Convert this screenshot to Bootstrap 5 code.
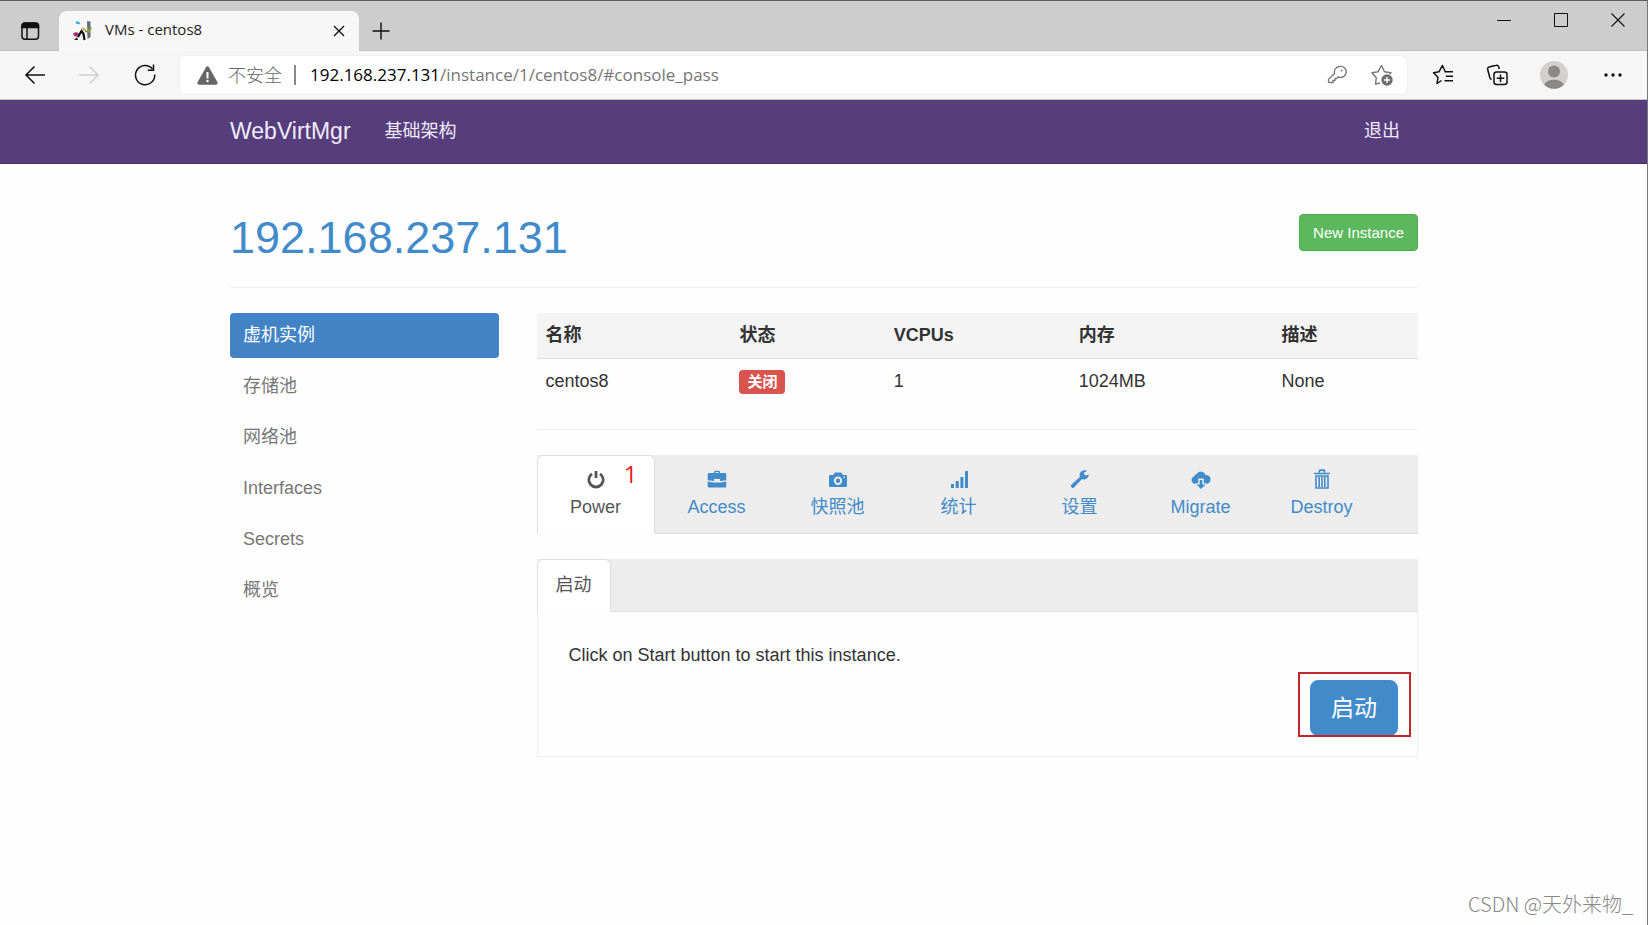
<!DOCTYPE html>
<html lang="zh-CN">
<head>
<meta charset="utf-8">
<meta name="viewport" content="width=device-width, initial-scale=1">
<title>VMs - centos8</title>
<link href="https://cdn.jsdelivr.net/npm/bootstrap@5.3.0/dist/css/bootstrap.min.css" rel="stylesheet">
<style>
:root { --ui: "Open Sans", "Noto Sans CJK SC", sans-serif; --blue: #428bca; }
body { font: 18px/26px "Liberation Sans", "Noto Sans CJK SC", sans-serif; color: #333; background: #fefefe; border-top: 1px solid #5f5f5f; border-right: 1px solid #777; }
svg { display: block; flex: none; }
a { text-decoration: none; }
button.plain { border: 0; background: none; padding: 0; color: #111; }

/* browser frame */
.titlebar { background: #cdcdcd; height: 50px; padding: 10px 0 0 20px; border-bottom: 1px solid #c0c0c0; font-family: var(--ui); }
.page-tab { width: 300px; height: 40px; margin: 0 13px -1px 19px; padding: 0 14px; background: #f7f7f7; border-radius: 8px 8px 0 0; color: #222; font-size: 15px; }
.window-buttons { gap: 43px; padding: 2px 22px 0 0; }
.toolbar { background: #f6f6f6; height: 49px; padding: 0 25px 0 24px; border-bottom: 1px solid #c4c4c4; }
.toolbar-nav { gap: 34px; margin-right: 24px; }
.address { height: 38px; border-radius: 6px; background: #fff; padding: 0 14px 0 17px; font-family: var(--ui); font-size: 17px; box-shadow: 0 0 2px #e4e4e4; }
.address .state { color: #666; font-size: 18px; font-weight: 300; margin: 0 12px 0 10px; }
.address .rule { width: 2px; height: 20px; background: #888; margin-right: 14px; }
.address label { color: #000; }
.address input { border: 0; outline: 0; padding: 0; color: #767676; background: none; min-width: 0; }
.toolbar-tools { gap: 32px; margin-left: 25px; }

/* site */
.site-width { max-width: 1227px; padding: 0 19px 0 20px; }
.site-nav { background: #563d7c; height: 64px; border-bottom: 1px solid #3f2f63; padding: 0 0 2px; }
.site-nav a { color: #f1eafa; }
.site-nav .navbar-brand { font-size: 23px; line-height: 26px; padding: 0; margin-right: 34px; }
.log-out { margin-right: 18px; }
.page-head { height: 124px; padding-top: 50px; border-bottom: 1px solid #eee; margin-bottom: 25px; }
.page-head h1 { font-size: 45px; line-height: 48px; font-weight: 400; margin: 0; }
.page-head h1 a { color: var(--blue); }
.btn-new { --bs-btn-color: #fff; --bs-btn-bg: #5cb85c; --bs-btn-border-color: #4cae4c; --bs-btn-hover-color: #fff; --bs-btn-hover-bg: #449d44; --bs-btn-padding-x: 13px; --bs-btn-padding-y: 6px; --bs-btn-font-size: 15px; --bs-btn-line-height: 23px; --bs-btn-border-radius: 4px; }
.main-row { --bs-gutter-x: 38px; }
.side { gap: 6px; }
.side .nav-link { color: #777; padding: 9px 13px 10px; border-radius: 4px; }
.side .nav-link.active { background: #4183c4; color: #fff; }
.vm-table { margin: 0; table-layout: fixed; color: #333; }
.vm-table > :not(caption) > * > * { padding: 9px; border: 0; color: #333; background: none; }
.vm-table thead th { background: #f4f4f4; border-bottom: 1px solid #ddd; padding-bottom: 10px; }
.c-name { width: 22%; } .c-state { width: 17.5%; } .c-cpu { width: 21%; } .c-mem { width: 23%; }
.state-off { background: #d9534f; font-size: 15px; line-height: 16px; padding: 4px 8px; border-radius: 4px; vertical-align: middle; }
.split { height: 1px; background: #eee; margin: 26px 0 25px; }
.strip { background: #ededed; border-bottom: 1px solid #ddd; }
.strip .nav-link { color: var(--blue); border-radius: 6px 6px 0 0; }
.strip .nav-link.active { color: #555; background: #fff; border-color: #ddd #ddd #fff; }
.actions { gap: 3px; margin-bottom: 25px; }
.actions .nav-link { width: 118px; height: 79px; padding: 13px 0 0; }
.actions svg { margin: 0 auto 5px; }
.mark-one { right: 16px; top: 4px; color: #ed1c24; font-family: var(--ui); font-size: 24px; line-height: 28px; }
.substrip .nav-link { padding: 12px 18px 13px; }
.start-panel { border: 1px solid #eee; border-top: 0; padding: 30px 19px 20px 31px; }
.btn-start { --bs-btn-color: #fff; --bs-btn-bg: #428bca; --bs-btn-border-color: #428bca; --bs-btn-hover-color: #fff; --bs-btn-hover-bg: #3276b1; --bs-btn-padding-x: 20px; --bs-btn-padding-y: 12px; --bs-btn-font-size: 23px; --bs-btn-line-height: 30px; --bs-btn-border-radius: 8px; }
.red-frame { inset: -8px -13px -1px -12px; border: 2px solid #c1272d; pointer-events: none; }
.watermark { right: 14px; bottom: 7px; color: #888; font-family: "Noto Sans CJK SC", sans-serif; font-weight: 300; font-size: 20px; line-height: 28px; }
</style>
</head>
<body class="min-vh-100 d-flex flex-column position-relative">

<header>
  <div class="titlebar d-flex align-items-center">
    <button class="plain" aria-label="Tab actions"><svg width="20" height="20" viewBox="0 0 20 20" fill="none" stroke="#111" stroke-width="1.5"><rect x="2" y="2.2" width="16.5" height="16" rx="3"/><path d="M2 5a3 3 0 0 1 3-3h10.500a3 3 0 0 1 3 3v1.500H2z" fill="#111"/><path d="M7 7v11"/></svg></button>
    <div class="page-tab d-flex align-items-center">
      <svg width="20" height="22" viewBox="0 0 20 22"><path d="M3 1l4 1.500-.5 2L3 3.500z" fill="#2ca8e0"/><path d="M14 1l3.500.5L17.500 17l-3 2z" fill="#66707c"/><path d="M11 8l3 3 4-4 1 1-3 5-4-1z" fill="#8a9b3a"/><path d="M0 13.500l3-1.500 3 1.500-2 3-3-.5z" fill="#b02a78"/><path d="M5 17l3.500-6 2 3 1 6" fill="none" stroke="#111" stroke-width="2.200"/><path d="M1 20l3-3 1 3z" fill="#222"/><path d="M8 9l3-2 1 4z" fill="#c9b458"/></svg>
      <span class="ms-2 ps-1 flex-grow-1 pb-1">VMs - centos8</span>
      <button class="plain" aria-label="Close tab"><svg width="12" height="12" viewBox="0 0 12 12" stroke="#111" stroke-width="1.400"><path d="M1 1l10 10M11 1L1 11"/></svg></button>
    </div>
    <button class="plain" aria-label="New tab"><svg width="18" height="18" viewBox="0 0 18 18" stroke="#111" stroke-width="1.400"><path d="M9 .5v17M.5 9h17"/></svg></button>
    <div class="window-buttons d-flex align-self-start ms-auto">
      <button class="plain" aria-label="Minimize"><svg width="14" height="14" viewBox="0 0 14 14" stroke="#111"><path d="M0 7.500h14"/></svg></button>
      <button class="plain" aria-label="Maximize"><svg width="14" height="14" viewBox="0 0 14 14" stroke="#111" fill="none"><path d="M.5.5h13v13H.5z"/></svg></button>
      <button class="plain" aria-label="Close"><svg width="14" height="14" viewBox="0 0 14 14" stroke="#111" stroke-width="1.100"><path d="M.5.5l13 13M13.500.5l-13 13"/></svg></button>
    </div>
  </div>

  <div class="toolbar d-flex align-items-center">
    <div class="toolbar-nav d-flex align-items-center">
      <button class="plain" aria-label="Back"><svg width="21" height="20" viewBox="0 0 21 20" fill="none" stroke="#111" stroke-width="1.500"><path d="M21 10H2M10.500 1.500L2 10l8.500 8.500"/></svg></button>
      <button class="plain" aria-label="Forward" disabled><svg width="21" height="20" viewBox="0 0 21 20" fill="none" stroke="#cfcfcf" stroke-width="1.500"><path d="M0 10h19M10.500 1.500L19 10l-8.500 8.500"/></svg></button>
      <button class="plain" aria-label="Reload"><svg width="22" height="22" viewBox="0 0 22 22" fill="none" stroke="#111" stroke-width="1.500"><path d="M20.700 10.500A9.600 9.600 0 1 1 18.500 5"/><path d="M19.500.5v5.700h-5.700"/></svg></button>
    </div>
    <div class="address d-flex align-items-center flex-grow-1">
      <svg width="21" height="19" viewBox="0 0 21 19"><path d="M9 1.200a1.700 1.700 0 0 1 3 0l8.500 15a1.700 1.700 0 0 1-1.500 2.500H2a1.700 1.700 0 0 1-1.500-2.500z" fill="#666"/><path d="M10.500 6v6.500" stroke="#fff" stroke-width="2"/><circle cx="10.500" cy="15" r="1.200" fill="#fff"/></svg>
      <span class="state">不安全</span><span class="rule"></span>
      <label for="url">192.168.237.131</label><input id="url" class="flex-grow-1" type="text" value="/instance/1/centos8/#console_pass">
      <button class="plain" aria-label="Saved password"><svg width="20" height="20" viewBox="0 0 20 20" fill="none" stroke="#777" stroke-width="1.300"><path d="M12.500 1.500a5.500 5.500 0 1 1-1 10.300L9.500 13.500H8v2H6v2H2.500a1 1 0 0 1-1-1v-2.200L7.600 8.500a5.500 5.500 0 0 1 4.900-7z"/><circle cx="14.500" cy="5.500" r="1" fill="#777" stroke="none"/></svg></button>
      <button class="plain ms-4" aria-label="Add to favorites"><svg width="22" height="22" viewBox="0 0 22 22" fill="none"><path d="M9 19l-4.500 1 .8-6.200L1 8.700l6-.9L10.500 1.500l3 6.300 6.500.9-1.500 1.500" stroke="#777" stroke-width="1.400" stroke-linejoin="round"/><circle cx="16" cy="16" r="5.700" fill="#6e6e6e"/><path d="M16 13v6M13 16h6" stroke="#fff" stroke-width="1.400"/></svg></button>
    </div>
    <div class="toolbar-tools d-flex align-items-center">
      <button class="plain" aria-label="Favorites"><svg width="22" height="22" viewBox="0 0 22 22" fill="none" stroke="#111" stroke-width="1.500" stroke-linejoin="round"><path d="M9.500 16.500L5 19.500l1-6.200L1.500 8.700l5.500-.9 3.300-6.300 3 6.300M12.500 7.800H21M14 12.300h7M12.500 16.800H21"/></svg></button>
      <button class="plain" aria-label="Collections"><svg width="22" height="22" viewBox="0 0 22 22" fill="none" stroke="#111" stroke-width="1.500"><rect x="8" y="8" width="13" height="12.500" rx="2.500"/><path d="M14.500 10.500v7.500M10.700 14.200h7.600M5.500 15.500A4 4 0 0 1 3.500 12.500L1.700 5.500a2.200 2.200 0 0 1 1.400-2.600L10 1.300a2 2 0 0 1 2.500 1.200l.8 2.500"/></svg></button>
      <button class="plain" aria-label="Profile"><svg width="28" height="28" viewBox="0 0 28 28"><circle cx="14" cy="14" r="14" fill="#d2d0ce"/><circle cx="14" cy="10.500" r="6" fill="#8a8886"/><path d="M4 23.500a11 8 0 0 1 20 0A14 14 0 0 1 4 23.500z" fill="#8a8886"/></svg></button>
      <button class="plain ms-1" aria-label="Settings and more"><svg width="18" height="6" viewBox="0 0 18 6" fill="#111"><circle cx="2" cy="3" r="1.700"/><circle cx="9" cy="3" r="1.700"/><circle cx="16" cy="3" r="1.700"/></svg></button>
    </div>
  </div>
</header>

<nav class="site-nav navbar navbar-expand">
  <div class="site-width container-fluid">
    <a class="navbar-brand" href="#">WebVirtMgr</a>
    <a href="#">基础架构</a>
    <a class="log-out ms-auto" href="#">退出</a>
  </div>
</nav>

<main class="site-width container-fluid flex-grow-1">
  <div class="page-head d-flex justify-content-between align-items-start">
    <h1><a href="#">192.168.237.131</a></h1>
    <button class="btn btn-new">New Instance</button>
  </div>

  <div class="main-row row">
    <div class="col-3">
      <nav class="side nav nav-pills flex-column" aria-label="Host">
        <a class="nav-link active" href="#">虚机实例</a>
        <a class="nav-link" href="#">存储池</a>
        <a class="nav-link" href="#">网络池</a>
        <a class="nav-link" href="#">Interfaces</a>
        <a class="nav-link" href="#">Secrets</a>
        <a class="nav-link" href="#">概览</a>
      </nav>
    </div>

    <div class="col-9">
      <table class="vm-table table">
        <thead><tr><th class="c-name">名称</th><th class="c-state">状态</th><th class="c-cpu">VCPUs</th><th class="c-mem">内存</th><th>描述</th></tr></thead>
        <tbody><tr><td>centos8</td><td><span class="badge state-off">关闭</span></td><td>1</td><td>1024MB</td><td>None</td></tr></tbody>
      </table>
      <div class="split"></div>

      <nav class="strip actions nav nav-tabs text-center flex-nowrap" aria-label="Instance">
        <a class="nav-link active position-relative" href="#"><svg width="20" height="20" viewBox="0 0 20 20" fill="none" stroke="#555" stroke-width="2.800"><path d="M6 4.800a7.200 7.200 0 1 0 8 0M10 2v7"/></svg>Power<span class="mark-one position-absolute">1</span></a>
        <a class="nav-link" href="#"><svg width="20" height="20" viewBox="0 0 20 20" fill="currentColor"><path d="M7 4V3a1.300 1.300 0 0 1 1.300-1.300h3.400A1.300 1.300 0 0 1 13 3v1h5a1.300 1.300 0 0 1 1.300 1.300v5.900L13 12v-2H7v2L.7 11.200V5.300A1.300 1.300 0 0 1 2 4zm1.500 0h3V3h-3zM.7 12.500l5.300 1h8l5.300-1v4.700a1.300 1.300 0 0 1-1.300 1.300H2a1.300 1.300 0 0 1-1.300-1.300z"/></svg>Access</a>
        <a class="nav-link" href="#"><svg width="20" height="20" viewBox="0 0 20 20" fill="currentColor" fill-rule="evenodd"><path d="M2 6h3l2-2.500h6L15 6h3a1 1 0 0 1 1 1v10a1 1 0 0 1-1 1H2a1 1 0 0 1-1-1V7a1 1 0 0 1 1-1zm8 1.500a4.200 4.200 0 1 0 0 8.400 4.200 4.200 0 0 0 0-8.400zm0 2a2.200 2.200 0 1 1 0 4.400 2.200 2.200 0 0 1 0-4.400zM15.500 7.500v1.500H17V7.500z"/></svg>快照池</a>
        <a class="nav-link" href="#"><svg width="20" height="20" viewBox="0 0 20 20" fill="currentColor"><path d="M2 15h3v4H2zM6.700 12h3v7h-3zM11.400 8h3v11h-3zM16 2h3v17h-3z"/></svg>统计</a>
        <a class="nav-link" href="#"><svg width="20" height="20" viewBox="0 0 20 20" fill="currentColor"><path d="M18.800 5.300a5 5 0 0 1-6.800 4.800L4 18.500a1.500 1.500 0 0 1-2.200 0l-.5-.5a1.500 1.500 0 0 1 0-2.200L9.800 8A5 5 0 0 1 15.500 1.300L17 2l-3 1.500.3 2.300 2 .7z"/></svg>设置</a>
        <a class="nav-link" href="#"><svg width="20" height="20" viewBox="0 0 20 20" fill="currentColor"><path d="M4.500 15A3.900 3.900 0 0 1 3 7.500 2.700 2.700 0 0 1 5.500 5.200 5 5 0 0 1 14.600 6 4.500 4.500 0 0 1 15.500 15z"/><path d="M7.200 9.500h5.600v4.700h3.200L10 21l-6-6.800h3.200z" fill="#ededed"/><path d="M8.700 11h2.600v4.500h3.200L10 20l-4.500-4.500h3.200z"/></svg>Migrate</a>
        <a class="nav-link" href="#"><svg width="20" height="20" viewBox="0 0 20 20" fill="none" stroke="currentColor"><path d="M7 3.500l1-2.300h4l1 2.300M2 4.500h16" stroke-width="1.700"/><path d="M4 7h12v12H4zM7.200 8v10M10 8v10M12.800 8v10" stroke-width="1.600"/></svg>Destroy</a>
      </nav>

      <nav class="strip substrip nav nav-tabs" aria-label="Power">
        <a class="nav-link active" href="#">启动</a>
      </nav>
      <div class="start-panel">
        <p class="mb-0">Click on Start button to start this instance.</p>
        <div class="d-flex justify-content-end pt-2 mt-1">
          <div class="position-relative d-flex">
            <button class="btn btn-start">启动</button>
            <span class="red-frame position-absolute"></span>
          </div>
        </div>
      </div>
    </div>
  </div>
</main>

<div class="watermark position-absolute">CSDN @天外来物_</div>
<script src="https://cdn.jsdelivr.net/npm/bootstrap@5.3.0/dist/js/bootstrap.bundle.min.js"></script>
</body>
</html>
